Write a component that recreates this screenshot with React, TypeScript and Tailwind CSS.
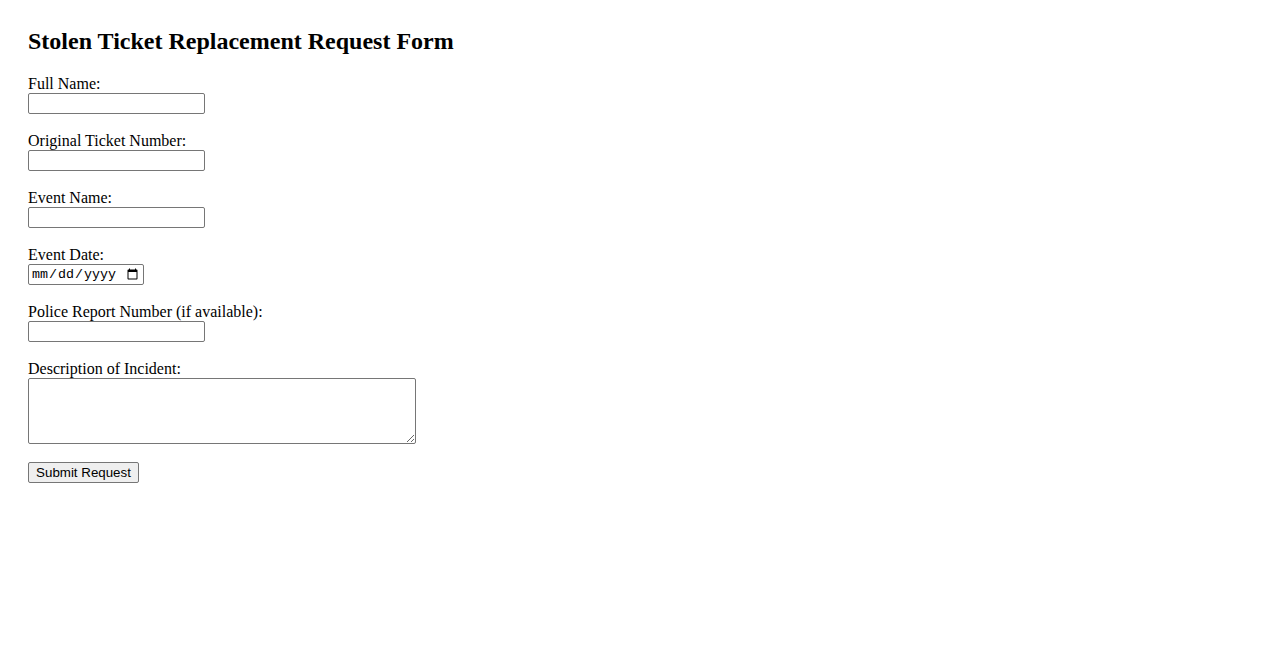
export default function App() {
  const field = 'block w-[177px] h-[21px] border border-[#767676] rounded-[2px] bg-white px-[2px] text-[13.33px] font-["Liberation_Sans",Arial,sans-serif]'
  const label = 'block text-[16px] leading-[18px]'

  return (
    <div className='min-h-screen bg-white p-7 text-black font-["Liberation_Serif","Times_New_Roman",serif]'>
      <h2 className="text-[24px] font-bold leading-[27px] mb-[20px]">Stolen Ticket Replacement Request Form</h2>
      <form onSubmit={(e) => e.preventDefault()}>
        <div className="mb-[18px]">
          <label className={label} htmlFor="fullName">Full Name:</label>
          <input id="fullName" type="text" className={field} />
        </div>
        <div className="mb-[18px]">
          <label className={label} htmlFor="ticket">Original Ticket Number:</label>
          <input id="ticket" type="text" className={field} />
        </div>
        <div className="mb-[18px]">
          <label className={label} htmlFor="event">Event Name:</label>
          <input id="event" type="text" className={field} />
        </div>
        <div className="mb-[18px]">
          <label className={label} htmlFor="date">Event Date:</label>
          <input
            id="date"
            type="date"
            className='block w-[116px] h-[21px] border border-[#767676] rounded-[2px] bg-white px-[2px] text-[13.33px] font-["Liberation_Mono","Courier_New",monospace]'
          />
        </div>
        <div className="mb-[18px]">
          <label className={label} htmlFor="police">Police Report Number (if available):</label>
          <input id="police" type="text" className={field} />
        </div>
        <div className="mb-[18px]">
          <label className={label} htmlFor="desc">Description of Incident:</label>
          <textarea
            id="desc"
            className='block w-[388px] h-[66px] border border-[#767676] rounded-[2px] bg-white p-[2px] text-[13.33px] font-["Liberation_Mono","Courier_New",monospace]'
          />
        </div>
        <button
          type="submit"
          className='block h-[21px] w-[111px] border border-[#767676] rounded-[2px] bg-[#efefef] text-[13.33px] leading-none text-black font-["Liberation_Sans",Arial,sans-serif]'
        >
          Submit Request
        </button>
      </form>
    </div>
  )
}
